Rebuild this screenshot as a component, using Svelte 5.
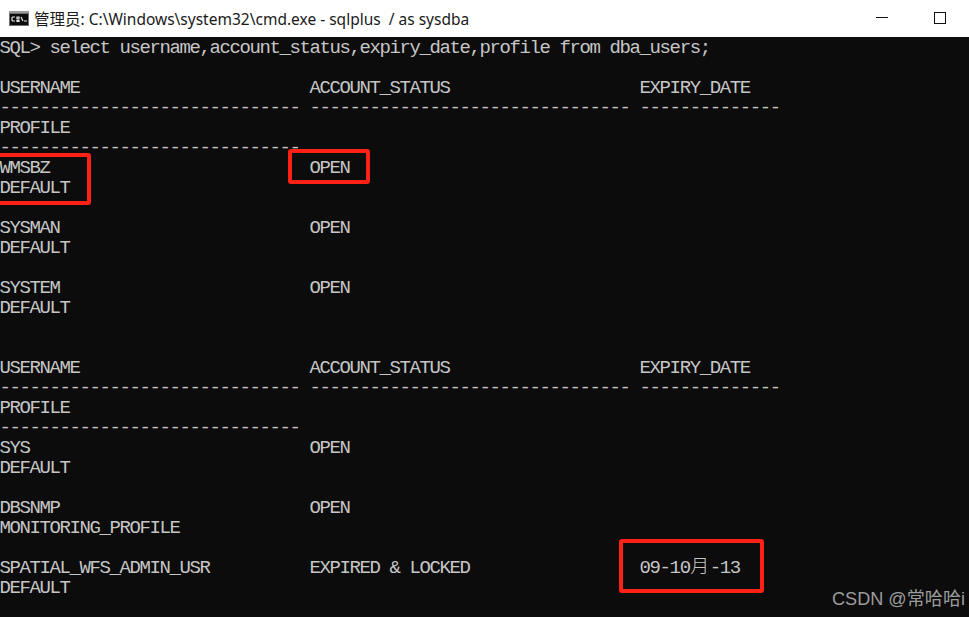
<script>
  const rows = `SQL> select username,account_status,expiry_date,profile from dba_users;

USERNAME                       ACCOUNT_STATUS                   EXPIRY_DATE
------------------------------ -------------------------------- --------------
PROFILE
------------------------------
WMSBZ                          OPEN
DEFAULT

SYSMAN                         OPEN
DEFAULT

SYSTEM                         OPEN
DEFAULT


USERNAME                       ACCOUNT_STATUS                   EXPIRY_DATE
------------------------------ -------------------------------- --------------
PROFILE
------------------------------
SYS                            OPEN
DEFAULT

DBSNMP                         OPEN
MONITORING_PROFILE
`.split('\n');
</script>

<div class="window">
  <header class="titlebar">
    <svg class="app-icon" width="20" height="15" viewBox="0 0 20 15" aria-hidden="true">
      <rect width="20" height="15" fill="#6e6e6e" />
      <rect x="1" y="3" width="18" height="11" fill="#0c0c0c" />
      <rect x="0" y="0" width="20" height="2" fill="#9a9a9a" />
      <path d="M3 6h3M3 6v4M3 10h3M8 6h2v2H8zM8 9.5h2v1H8zM12 6l2 4M15 10h3" stroke="#e6e6e6" stroke-width="1.2" fill="none" />
    </svg>
    <span class="title">管理员: C:\Windows\system32\cmd.exe - sqlplus&nbsp; / as sysdba</span>
    <div class="controls">
      <span class="min"></span>
      <span class="max"></span>
    </div>
  </header>
  <main class="console">
    <div class="output">
      {#each rows as row}
        <div class="row">{row}</div>
      {/each}
      <div class="row">SPATIAL_WFS_ADMIN_USR          EXPIRED &amp; LOCKED                 09-10<span class="cjk">月</span>-13</div>
      <div class="row">DEFAULT</div>
    </div>
    <div class="mark mark-a"></div>
    <div class="mark mark-b"></div>
    <div class="mark mark-c"></div>
    <div class="watermark">CSDN @常哈哈i</div>
  </main>
</div>

<style>
  :global(body) {
    margin: 0;
    background: #0c0c0c;
  }
  .window {
    width: 969px;
    height: 617px;
    display: flex;
    flex-direction: column;
    overflow: hidden;
  }
  .titlebar {
    height: 37px;
    flex: none;
    background: #fff;
    display: flex;
    align-items: center;
    padding-left: 9px;
    box-sizing: border-box;
  }
  .app-icon {
    margin-right: 5px;
    margin-top: -1px;
  }
  .title {
    font: 15.5px "Noto Sans", "Noto Sans CJK SC", sans-serif;
    color: #1a1a1a;
    white-space: pre;
    margin-top: -1px;
  }
  .controls {
    margin-left: auto;
    display: flex;
    align-items: center;
    gap: 46px;
    padding-right: 23px;
    margin-top: -2px;
  }
  .min {
    width: 12px;
    height: 1px;
    background: #111;
  }
  .max {
    width: 10px;
    height: 10px;
    border: 1px solid #111;
  }
  .console {
    position: relative;
    flex: 1;
    background: #0c0c0c;
    padding-top: 1px;
  }
  .output {
    font: 19px/20px "Liberation Mono", monospace;
    letter-spacing: -1.4px;
    color: #c6c6c6;
    margin-left: -0.5px;
  }
  .row {
    height: 20px;
    white-space: pre;
  }
  .cjk {
    display: inline-block;
    width: 20px;
    letter-spacing: 0;
    font: 300 19px/0 "Noto Sans CJK SC", sans-serif;
    text-align: center;
  }
  .mark {
    position: absolute;
    border: 4px solid #ff2016;
    border-radius: 3px;
    box-sizing: border-box;
  }
  .mark-a {
    left: -4px;
    top: 116px;
    width: 95px;
    height: 52px;
  }
  .mark-b {
    left: 288px;
    top: 112px;
    width: 82px;
    height: 35px;
  }
  .mark-c {
    left: 619px;
    top: 502px;
    width: 145px;
    height: 54px;
  }
  .watermark {
    position: absolute;
    right: 4px;
    top: 547px;
    font: 18.1px "Liberation Sans", "Noto Sans CJK SC", sans-serif;
    color: #9c9c9c;
  }
</style>
